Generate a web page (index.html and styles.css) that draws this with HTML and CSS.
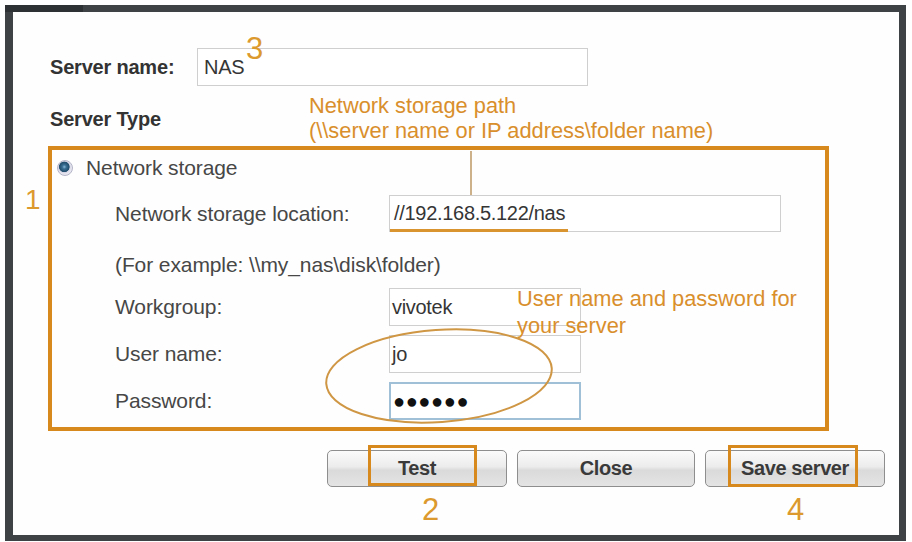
FILE: index.html
```html
<!DOCTYPE html>
<html lang="en">
<head>
<meta charset="utf-8">
<title>Network storage server</title>
<link rel="stylesheet" href="styles.css">
</head>
<body>
<div class="frame">
  <div class="name-row">
    <span class="label-bold name-label">Server name:</span>
    <div class="input name-input">NAS</div>
  </div>
  <div class="label-bold type-title">Server Type</div>

  <div class="box">
    <div class="radio-row">
      <span class="radio"></span>
      <span class="label">Network storage</span>
    </div>
    <div class="field loc-row">
      <span class="label">Network storage location:</span>
      <div class="input loc-input">//192.168.5.122/nas</div>
    </div>
    <div class="example label">(For example: \\my_nas\disk\folder)</div>
    <div class="field wg-row">
      <span class="label">Workgroup:</span>
      <div class="input short-input">vivotek</div>
    </div>
    <div class="field user-row">
      <span class="label">User name:</span>
      <div class="input short-input">jo</div>
    </div>
    <div class="field pass-row">
      <span class="label">Password:</span>
      <div class="input short-input pass-input"><span class="dots">●●●●●●</span></div>
    </div>
  </div>

  <div class="buttons">
    <button class="btn btn-test">Test<span class="hl hl-test"></span></button>
    <button class="btn btn-close">Close</button>
    <button class="btn btn-save">Save server<span class="hl hl-save"></span></button>
  </div>

  <!-- annotations -->
  <span class="num num-3">3</span>
  <span class="num num-1">1</span>
  <span class="num num-2">2</span>
  <span class="num num-4">4</span>
  <div class="note note-path">Network storage path<br>(\\server name or IP address\folder name)</div>
  <div class="note note-user">User name and password for<br>your server</div>
  <span class="connector"></span>
  <span class="underline"></span>
  <svg class="ellipse" width="240" height="106" viewBox="0 0 240 106">
    <ellipse cx="119" cy="54" rx="113" ry="46" transform="rotate(-4 119 54)" fill="none" stroke="#cf9644" stroke-width="2"/>
  </svg>
</div>
</body>
</html>
```

FILE: styles.css
```css
html, body {
  margin: 0;
  padding: 0;
  background: #ffffff;
}

body {
  font-family: "Liberation Sans", Arial, sans-serif;
  width: 912px;
  height: 542px;
  overflow: hidden;
}

.frame {
  position: relative;
  box-sizing: border-box;
  width: 901px;
  height: 536px;
  margin: 5px 0 0 5px;
  border-style: solid;
  border-color: #3f4245;
  border-width: 7px 7px 6px 8px;
  background: #fefefe;
  display: flex;
  flex-direction: column;
  align-items: flex-start;
}

.frame::before {
  content: "";
  position: absolute;
  left: -8px;
  top: -7px;
  width: 78px;
  height: 7px;
  background: #2e3134;
}

.label-bold {
  font-weight: bold;
  font-size: 20px;
  color: #333333;
  letter-spacing: -0.2px;
}

.label {
  font-size: 21px;
  color: #474747;
  letter-spacing: -0.1px;
}

.input {
  box-sizing: border-box;
  height: 38px;
  border: 1px solid #cfcfcf;
  background: #ffffff;
  font-size: 20px;
  color: #353535;
  line-height: 36px;
  padding-left: 4px;
  letter-spacing: -0.3px;
}

/* server name row */
.name-row {
  display: flex;
  align-items: center;
  margin: 36px 0 0 37px;
  height: 38px;
}
.name-label {
  width: 147px;
}
.name-input {
  width: 391px;
  padding-left: 6px;
}

.type-title {
  margin: 21px 0 0 37px;
  line-height: 24px;
}

/* highlighted box */
.box {
  box-sizing: border-box;
  width: 781px;
  height: 285px;
  margin: 15px 0 0 35px;
  border: 4px solid #d7891d;
  display: flex;
  flex-direction: column;
}

.radio-row {
  display: flex;
  align-items: center;
  gap: 13px;
  height: 36px;
  padding-left: 5px;
}
.radio {
  box-sizing: border-box;
  width: 16px;
  height: 16px;
  border-radius: 50%;
  border: 1px solid #b4b4c8;
  background: radial-gradient(circle at 45% 42%, #8ab8d8 0, #3a6f94 2px, #24506f 4.5px, #2a5675 5px, #d4d4e4 5.6px, #e6e6f0 7px);
}

.field {
  display: grid;
  grid-template-columns: 274px auto;
  align-items: center;
  padding-left: 63px;
}
.loc-row {
  margin-top: 9px;
}
.loc-input {
  width: 392px;
  height: 37px;
  line-height: 35px;
}
.example {
  margin-top: 21px;
  padding-left: 63px;
  line-height: 24px;
}
.wg-row {
  margin-top: 11px;
}
.user-row,
.pass-row {
  margin-top: 9px;
}
.short-input {
  width: 192px;
  padding-left: 2px;
}
.pass-input {
  border-color: #9fc0d6;
  border-width: 2px;
  line-height: 34px;
  padding-left: 2px;
}
.dots {
  font-size: 20px;
  letter-spacing: 0.6px;
  color: #111111;
}

/* buttons */
.buttons {
  align-self: stretch;
  display: flex;
  justify-content: flex-end;
  gap: 10px;
  margin-top: 19px;
  padding-right: 14px;
}
.btn {
  position: relative;
  box-sizing: border-box;
  width: 180px;
  height: 37px;
  border: 1px solid #8e8e8e;
  border-radius: 5px;
  background: linear-gradient(#fbfbfb 0%, #ececec 45%, #dadada 55%, #e4e4e4 100%);
  font-family: "Liberation Sans", Arial, sans-serif;
  font-weight: bold;
  font-size: 20px;
  letter-spacing: -0.4px;
  color: #3a3a3a;
  padding: 0;
}
.btn-close {
  width: 178px;
}

.hl {
  position: absolute;
  box-sizing: border-box;
  border: 3.5px solid #d7891d;
  top: -6px;
}
.hl-test {
  left: 40px;
  width: 109px;
  height: 41px;
}
.hl-save {
  left: 22px;
  width: 130px;
  height: 42px;
}

/* annotations */
.num {
  position: absolute;
  font-size: 31px;
  line-height: 31px;
  color: #dc9a2e;
}
.num-3 { left: 233px; top: 21px; }
.num-1 { left: 12px; top: 174px; font-size: 28px; line-height: 28px; }
.num-2 { left: 409px; top: 482px; }
.num-4 { left: 774px; top: 482px; }

.note {
  position: absolute;
  font-size: 21.8px;
  color: #d98f2c;
  white-space: nowrap;
}
.note-path {
  left: 296px;
  top: 81px;
  line-height: 25px;
}
.note-user {
  left: 504px;
  top: 273px;
  line-height: 27px;
}

.connector {
  position: absolute;
  left: 457px;
  top: 139px;
  width: 1.5px;
  height: 44px;
  background: #cdb18a;
}
.underline {
  position: absolute;
  left: 377px;
  top: 217px;
  width: 178px;
  height: 2.5px;
  background: #d9942f;
}
.ellipse {
  position: absolute;
  left: 307px;
  top: 310px;
}
```
